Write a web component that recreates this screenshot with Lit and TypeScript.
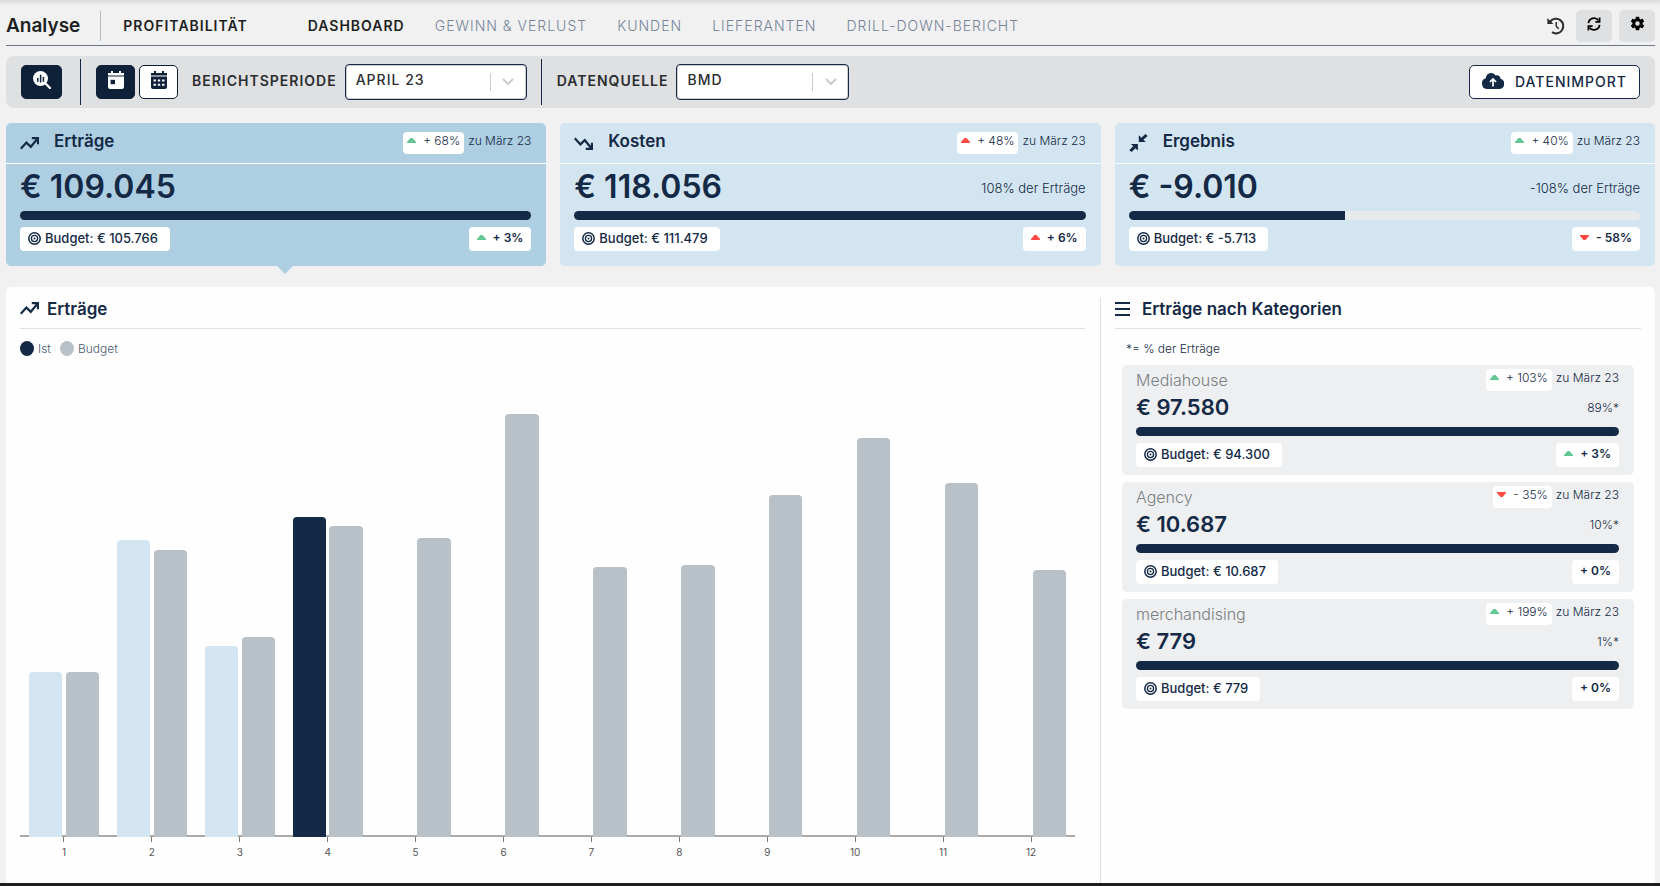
import { LitElement, html, css, svg, nothing } from "lit";
import { customElement, property, state } from "lit/decorators.js";
import { classMap } from "lit/directives/class-map.js";

type Direction = "up" | "down" | "none";
type Tone = "good" | "bad";

interface Delta {
  text: string;
  direction: Direction;
  tone: Tone;
}

interface Kpi {
  id: string;
  title: string;
  value: string;
  share: string;
  progress: number;
  budget: string;
  versusPrevious: Delta;
  versusBudget: Delta;
}

const icons = {
  trendUp: svg`<svg width="19" height="13" viewBox="0 0 19 13" fill="none" stroke="currentColor" stroke-width="2.200" aria-hidden="true"><path d="M.8 11.800 6.400 5.600l4.400 4.200 6.600-8"/><path d="M11.800 1.200H18v6"/></svg>`,
  trendDown: svg`<svg width="19" height="13" viewBox="0 0 19 13" fill="none" stroke="currentColor" stroke-width="2.200" aria-hidden="true"><path d="M.8 1.200l5.600 6.200 4.400-4.200 6.600 8"/><path d="M11.800 11.800H18v-6"/></svg>`,
  compress: svg`<svg width="19" height="18" viewBox="0 0 19 18" fill="currentColor" aria-hidden="true"><path d="M9.800 1.200v6.900h7l-2.400-2.400L18.600 2 16.400 0l-4 3.700z"/><path d="M8.900 16.800V9.900H1.900l2.400 2.400L.3 16l2.200 2 4-3.700z"/></svg>`,
  target: svg`<svg width="13" height="13" viewBox="0 0 13 13" fill="none" stroke="currentColor" aria-hidden="true"><circle cx="6.500" cy="6.500" r="5.700" stroke-width="1.500"/><circle cx="6.500" cy="6.500" r="3.100" stroke-width="1.300"/><circle cx="6.500" cy="6.500" r="1" fill="currentColor" stroke="none"/></svg>`,
  list: svg`<svg width="15" height="14" viewBox="0 0 15 14" stroke="currentColor" stroke-width="2" aria-hidden="true"><path d="M0 1h15M0 7h15M0 13h15"/></svg>`,
  history: svg`<svg width="18" height="18" viewBox="0 0 18 18" fill="none" stroke="currentColor" aria-hidden="true"><path d="M3.200 4.600A7.300 7.300 0 1 1 5 15.200" stroke-width="2"/><path d="M.4 1v6h6z" fill="currentColor" stroke="none"/><path d="M9.200 5v4.200l2.600 2.600" stroke-width="1.500"/></svg>`,
  refresh: svg`<svg width="14" height="14" viewBox="0 0 14 14" fill="none" stroke="currentColor" stroke-width="1.700" aria-hidden="true"><path d="M1.400 6.200A5.600 5.600 0 0 1 11.600 3.600M12.600 7.800A5.600 5.600 0 0 1 2.400 10.400"/><path d="M12.600.6v4.200H8.400M1.400 13.400V9.200h4.200"/></svg>`,
  gear: svg`<svg width="17" height="17" viewBox="0 0 24 24" fill="currentColor" aria-hidden="true"><path d="M19.140 12.940c.04-.3.06-.61.06-.94 0-.32-.02-.64-.07-.94l2.030-1.580c.18-.14.23-.41.12-.61l-1.920-3.320c-.12-.22-.37-.29-.59-.22l-2.390.96c-.5-.38-1.030-.7-1.620-.94l-.36-2.540c-.04-.24-.24-.41-.48-.41h-3.840c-.24 0-.43.17-.47.41l-.36 2.540c-.59.24-1.130.57-1.620.94l-2.390-.96c-.22-.08-.47 0-.59.22L2.740 8.870c-.12.21-.08.47.12.61l2.030 1.580c-.05.3-.09.63-.09.94s.02.64.07.94l-2.030 1.580c-.18.14-.23.41-.12.61l1.920 3.320c.12.22.37.29.59.22l2.390-.96c.5.38 1.030.7 1.620.94l.36 2.540c.05.24.24.41.48.41h3.840c.24 0 .44-.17.47-.41l.36-2.540c.59-.24 1.130-.56 1.620-.94l2.390.96c.22.08.47 0 .59-.22l1.920-3.320c.12-.22.07-.47-.12-.61l-2.010-1.580zM12 15.200a3.200 3.200 0 1 1 0-6.400 3.200 3.200 0 0 1 0 6.400z"/></svg>`,
  searchChart: svg`<svg width="18" height="18" viewBox="0 0 18 18" aria-hidden="true"><circle cx="7.500" cy="7.500" r="7.500" fill="currentColor"/><path d="M12 12l5 5" stroke="currentColor" stroke-width="2.400" stroke-linecap="round"/><path d="M4.800 7v3.800M7.600 3.800v7.600M10.400 6v4.800" stroke="#0e2138" stroke-width="1.500"/></svg>`,
  day: svg`<svg width="16" height="18" viewBox="0 0 16 18" aria-hidden="true"><path d="M3 0h2v2h6V0h2v2h3v2.600H0V2h3z" fill="currentColor"/><path d="M0 5.600h16V16a2 2 0 0 1-2 2H2a2 2 0 0 1-2-2z" fill="currentColor"/><path d="M2.600 8.800h4.400v4.400H2.600z" fill="#0e2138"/></svg>`,
  month: svg`<svg width="16" height="18" viewBox="0 0 16 18" aria-hidden="true"><path d="M3 0h2v2h6V0h2v2h3v2.600H0V2h3z" fill="currentColor"/><path d="M0 5.600h16V16a2 2 0 0 1-2 2H2a2 2 0 0 1-2-2z" fill="currentColor"/><path d="M2.500 8.500h2.400v2H2.500zM6.800 8.500h2.400v2H6.800zM11.100 8.500h2.400v2h-2.400zM2.500 12.800h2.400v2H2.500zM6.800 12.800h2.400v2H6.800zM11.100 12.800h2.400v2h-2.400z" fill="#fff"/></svg>`,
  cloud: svg`<svg width="22" height="16" viewBox="0 0 22 16" aria-hidden="true"><path d="M5.500 16A5.500 5.500 0 0 1 3.700 5.300 6 6 0 0 1 9 0c2.200 0 3.600 1 4.700 2.400 2.600-.7 4.800 1 4.800 3.400A5.200 5.200 0 0 1 17.200 16z" fill="currentColor"/><path d="M11 13.500V6.200M7.900 9 11 5.900 14.100 9" stroke="#fff" stroke-width="1.700" fill="none"/></svg>`,
  chevron: svg`<svg width="12" height="8" viewBox="0 0 12 8" fill="none" stroke="currentColor" stroke-width="2" stroke-linecap="round" aria-hidden="true"><path d="M1.500 1.500 6 6l4.500-4.500"/></svg>`,
};

const cardIcon: Record<string, unknown> = {
  income: icons.trendUp,
  costs: icons.trendDown,
  result: icons.compress,
};

@customElement("delta-badge")
class DeltaBadge extends LitElement {
  @property({ attribute: false }) delta!: Delta;
  @property({ type: Boolean, reflect: true }) strong = false;

  static styles = css`
    :host {
      display: inline-flex;
      align-items: center;
      box-sizing: border-box;
      height: 22px;
      padding: 0 4px 5px;
      border-radius: 4px;
      background: #fff;
      font-size: 12px;
      font-weight: 300;
      white-space: nowrap;
    }
    :host([strong]) {
      height: 24px;
      padding: 0 8px 3px;
      font-weight: 600;
    }
    .arrow {
      margin-right: 7px;
    }
    .good {
      color: #63c794;
    }
    .bad {
      color: #ff4842;
    }
  `;

  render() {
    const { text, direction, tone } = this.delta;
    return html`${direction === "none"
        ? nothing
        : html`<svg class="arrow ${tone}" width="9" height="5" viewBox="0 0 9 5" fill="currentColor" aria-hidden="true">
            <path d=${direction === "up" ? "M3.500 0h2L9 4v1H0V4z" : "M3.500 5h2L9 1V0H0v1z"} />
          </svg>`}<span>${text}</span>`;
  }
}

@customElement("budget-line")
class BudgetLine extends LitElement {
  @property({ attribute: false }) kpi!: Kpi;

  static styles = css`
    :host {
      display: block;
    }
    .track {
      height: 9px;
      border-radius: 5px;
      background: #e7eaed;
      overflow: hidden;
    }
    .fill {
      height: 100%;
      background: #142946;
    }
    .row {
      display: flex;
      align-items: center;
      justify-content: space-between;
      margin-top: 7px;
    }
    .budget {
      display: flex;
      align-items: center;
      gap: 4px;
      box-sizing: border-box;
      height: 24px;
      padding: 0 12px 2px 8px;
      border-radius: 4px;
      background: #fff;
      font-weight: 500;
    }
  `;

  render() {
    return html`
      <div class="track"><div class="fill" style="width:${this.kpi.progress}%"></div></div>
      <div class="row">
        <span class="budget">${icons.target}<span>Budget: ${this.kpi.budget}</span></span>
        <delta-badge strong .delta=${this.kpi.versusBudget}></delta-badge>
      </div>
    `;
  }
}

@customElement("kpi-card")
class KpiCard extends LitElement {
  @property({ attribute: false }) kpi!: Kpi;
  @property({ type: Boolean, reflect: true }) selected = false;

  static styles = css`
    :host {
      display: block;
      position: relative;
      border-radius: 5px;
      background: #d3e5f1;
      cursor: pointer;
    }
    :host([selected]) {
      background: #aecee2;
    }
    :host([selected])::after {
      content: "";
      position: absolute;
      top: 100%;
      left: calc(50% + 1px);
      border: 8px solid transparent;
      border-top-color: #aecee2;
      border-bottom: 0;
    }
    .head {
      display: flex;
      align-items: center;
      gap: 14px;
      height: 40px;
      padding: 0 15px 0 14px;
      border-bottom: 1px solid #fff;
    }
    .glyph {
      display: flex;
      width: 20px;
    }
    h2 {
      margin: 0;
      flex: 1;
      font-size: 17px;
      font-weight: 600;
      line-height: 36px;
      padding-bottom: 4px;
    }
    .previous {
      display: flex;
      gap: 4px;
      font-size: 12px;
      font-weight: 300;
      line-height: 17px;
    }
    .body {
      padding: 0 15px 15px 14px;
    }
    .figures {
      display: flex;
      align-items: center;
      justify-content: space-between;
      height: 44px;
      margin-bottom: 3px;
    }
    .value {
      font-size: 32px;
      font-weight: 600;
    }
    .share {
      font-weight: 300;
      padding-top: 4px;
    }
  `;

  render() {
    const k = this.kpi;
    return html`
      <div class="head">
        <span class="glyph">${cardIcon[k.id]}</span>
        <h2>${k.title}</h2>
        <div class="previous">
          <delta-badge .delta=${k.versusPrevious}></delta-badge>
          <span>zu März 23</span>
        </div>
      </div>
      <div class="body">
        <div class="figures">
          <span class="value">${k.value}</span>
          <span class="share">${k.share}</span>
        </div>
        <budget-line .kpi=${k}></budget-line>
      </div>
    `;
  }
}

@customElement("category-card")
class CategoryCard extends LitElement {
  @property({ attribute: false }) kpi!: Kpi;

  static styles = css`
    :host {
      display: block;
      padding: 4px 15px 8px 14px;
      border-radius: 5px;
      background: #edeff1;
    }
    .top,
    .figures {
      display: flex;
      justify-content: space-between;
    }
    .figures {
      align-items: center;
      height: 32px;
      margin-bottom: 4px;
    }
    h3 {
      margin: 0;
      font-size: 16px;
      font-weight: 300;
      line-height: 22px;
      color: #7c7f82;
    }
    .previous {
      display: flex;
      gap: 4px;
      font-size: 12px;
      font-weight: 300;
      line-height: 18px;
    }
    .value {
      font-size: 22px;
      font-weight: 600;
    }
    .share {
      font-size: 12px;
      font-weight: 300;
    }
  `;

  render() {
    const k = this.kpi;
    return html`
      <div class="top">
        <h3>${k.title}</h3>
        <div class="previous">
          <delta-badge .delta=${k.versusPrevious}></delta-badge>
          <span>zu März 23</span>
        </div>
      </div>
      <div class="figures">
        <span class="value">${k.value}</span>
        <span class="share">${k.share}</span>
      </div>
      <budget-line .kpi=${k}></budget-line>
    `;
  }
}

interface Month {
  actual: number;
  budget: number;
}

@customElement("bar-chart")
class BarChart extends LitElement {
  @property({ attribute: false }) months: Month[] = [];
  @property({ type: Number }) current = 4;

  private readonly axisMax = 162300;

  static styles = css`
    :host {
      display: flex;
      flex-direction: column;
    }
    .plot {
      flex: 1;
      min-height: 0;
      display: grid;
      grid-template-columns: repeat(12, 1fr);
      grid-template-rows: 100%;
      background: linear-gradient(#aaa, #aaa) bottom / 100% 2px no-repeat;
    }
    .month {
      display: flex;
      align-items: flex-end;
      gap: 5%;
      padding: 0 10%;
    }
    .bar {
      flex: 1;
      border-radius: 4px 4px 0 0;
    }
    .actual {
      background: #d3e5f1;
    }
    .actual.current {
      background: #142946;
    }
    .budget {
      background: #b8c0c8;
    }
    .axis {
      display: grid;
      grid-template-columns: repeat(12, 1fr);
      font-size: 10px;
      line-height: 12px;
      color: #555;
    }
    .tick {
      display: flex;
      flex-direction: column;
      align-items: center;
      gap: 4px;
    }
    .tick::before {
      content: "";
      width: 1px;
      height: 5px;
      background: #777;
    }
  `;

  private height(value: number) {
    return `height:${((value / this.axisMax) * 100).toFixed(2)}%`;
  }

  render() {
    return html`
      <div class="plot">
        ${this.months.map(
          (m, i) => html`<div class="month">
            <div class=${classMap({ bar: true, actual: true, current: i + 1 === this.current })} style=${this.height(m.actual)}></div>
            <div class="bar budget" style=${this.height(m.budget)}></div>
          </div>`
        )}
      </div>
      <div class="axis">${this.months.map((_, i) => html`<span class="tick">${i + 1}</span>`)}</div>
    `;
  }
}

const up = (text: string, tone: Tone = "good"): Delta => ({ text, direction: "up", tone });
const down = (text: string): Delta => ({ text, direction: "down", tone: "bad" });
const level = (text: string): Delta => ({ text, direction: "none", tone: "good" });

const kpis: Kpi[] = [
  { id: "income", title: "Erträge", value: "€ 109.045", share: "", progress: 100, budget: "€ 105.766", versusPrevious: up("+ 68%"), versusBudget: up("+ 3%") },
  { id: "costs", title: "Kosten", value: "€ 118.056", share: "108% der Erträge", progress: 100, budget: "€ 111.479", versusPrevious: up("+ 48%", "bad"), versusBudget: up("+ 6%", "bad") },
  { id: "result", title: "Ergebnis", value: "€ -9.010", share: "-108% der Erträge", progress: 42.4, budget: "€ -5.713", versusPrevious: up("+ 40%"), versusBudget: down("- 58%") },
];

const categories: Kpi[] = [
  { id: "mediahouse", title: "Mediahouse", value: "€ 97.580", share: "89%*", progress: 100, budget: "€ 94.300", versusPrevious: up("+ 103%"), versusBudget: up("+ 3%") },
  { id: "agency", title: "Agency", value: "€ 10.687", share: "10%*", progress: 100, budget: "€ 10.687", versusPrevious: down("- 35%"), versusBudget: level("+ 0%") },
  { id: "merchandising", title: "merchandising", value: "€ 779", share: "1%*", progress: 100, budget: "€ 779", versusPrevious: up("+ 199%"), versusBudget: level("+ 0%") },
];

const months: Month[] = [
  { actual: 56200, budget: 56200 },
  { actual: 101200, budget: 97800 },
  { actual: 64900, budget: 68100 },
  { actual: 109045, budget: 105766 },
  { actual: 0, budget: 101900 },
  { actual: 0, budget: 143800 },
  { actual: 0, budget: 92000 },
  { actual: 0, budget: 92700 },
  { actual: 0, budget: 116500 },
  { actual: 0, budget: 135600 },
  { actual: 0, budget: 120600 },
  { actual: 0, budget: 91000 },
];

const views = ["Dashboard", "Gewinn & Verlust", "Kunden", "Lieferanten", "Drill-Down-Bericht"];

@customElement("app-root")
class AppRoot extends LitElement {
  @state() private selected = "income";
  @state() private view = views[0];

  static styles = css`
    :host {
      display: flex;
      flex-direction: column;
      box-sizing: border-box;
      height: 100vh;
      min-height: 760px;
      padding: 0 5px 0 6px;
      border-bottom: 3px solid #1d1e20;
      background: linear-gradient(#dcdcdc, #f1f1f1 6px);
      color: #142946;
      font-family: Inter, "Liberation Sans", sans-serif;
      font-size: 13px;
      line-height: 17px;
    }
    button,
    select {
      font: inherit;
      color: inherit;
      cursor: pointer;
    }
    button {
      display: flex;
      align-items: center;
      justify-content: center;
      padding: 0;
      border: 0;
    }
    .header {
      display: flex;
      align-items: center;
      height: 46px;
      padding-top: 6px;
      box-sizing: border-box;
      border-bottom: 1px solid #6d7889;
      color: #1d1f22;
    }
    h1 {
      margin: 0;
      font-size: 19px;
      font-weight: 600;
      line-height: 24px;
    }
    .section {
      margin-left: 20px;
      padding-left: 22px;
      border-left: 1px solid #b4bdc7;
      line-height: 30px;
    }
    .section,
    .nav a {
      font-size: 14px;
      font-weight: 600;
      letter-spacing: 1px;
      text-transform: uppercase;
    }
    .nav {
      display: flex;
      gap: 30px;
      margin-left: 60px;
      flex: 1;
    }
    .nav a {
      color: #75849a;
      font-weight: 300;
      text-decoration: none;
    }
    .nav a.active {
      color: #1d1f22;
      font-weight: 600;
    }
    .tools {
      display: flex;
      align-items: center;
      gap: 7px;
      color: #000;
    }
    .tools button {
      width: 36px;
      height: 32px;
      padding-bottom: 4px;
      border-radius: 5px;
      background: #dfe0e2;
    }
    .tools .plain {
      width: 18px;
      margin-right: 4px;
      padding: 0;
      background: none;
      color: #2a2c2f;
    }
    .toolbar {
      display: flex;
      align-items: center;
      height: 52px;
      margin-top: 10px;
      padding: 0 15px;
      border-radius: 8px;
      background: #dfe0e2;
    }
    .rule {
      align-self: stretch;
      width: 1px;
      margin: 3px 15px 3px 14px;
      background: #142946;
    }
    .toolbar .rule + label {
      margin-left: 0;
    }
    .tile {
      box-sizing: border-box;
      width: 39px;
      height: 34px;
      padding-bottom: 4px;
      border: 1px solid #0e2138;
      border-radius: 5px;
      background: #fff;
      color: #0e2138;
    }
    .tile.dark {
      background: #0e2138;
      color: #fff;
    }
    .tile.wide {
      width: 41px;
      margin-right: 4px;
    }
    .periods {
      display: flex;
      gap: 4px;
    }
    label {
      margin: 0 8px 3px 14px;
      font-size: 14px;
      font-weight: 600;
      letter-spacing: 1px;
      text-transform: uppercase;
      color: #2b2d30;
    }
    .field {
      display: grid;
      align-items: center;
      grid-template-columns: 1fr 36px;
      box-sizing: border-box;
      width: 182px;
      height: 36px;
      border: 1px solid #142946;
      border-radius: 4px;
      background: #fff;
      box-shadow: inset 0 0 0 1px #ccc;
    }
    .field.narrow {
      width: 173px;
    }
    .field select {
      grid-area: 1 / 1 / 2 / 3;
      width: 100%;
      height: 34px;
      padding: 0 40px 5px 10px;
      border: 0;
      background: none;
      appearance: none;
      font-size: 14px;
      font-weight: 500;
      letter-spacing: 1px;
      color: #2b2d30;
    }
    .caret {
      grid-area: 1 / 2;
      display: flex;
      align-items: center;
      justify-content: center;
      height: 18px;
      border-left: 1px solid #ccc;
      color: #ccc;
      pointer-events: none;
    }
    .import {
      height: 34px;
      margin-left: auto;
      padding: 0 12px 2px 12px;
      gap: 11px;
      border: 1px solid #142946;
      border-radius: 5px;
      background: #fff;
      font-size: 14px;
      font-weight: 500;
      letter-spacing: 1px;
    }
    .cards {
      display: grid;
      grid-template-columns: repeat(3, 1fr);
      gap: 14px;
      margin-top: 15px;
    }
    .panel {
      flex: 1;
      min-height: 0;
      display: grid;
      grid-template-columns: minmax(0, 1094fr) minmax(0, 555fr);
      grid-template-rows: 100%;
      margin-top: 21px;
      border-radius: 5px 5px 0 0;
      background: #fefefe;
    }
    .chart {
      display: flex;
      flex-direction: column;
      padding: 10px 15px 25px 14px;
    }
    .aside {
      margin-top: 11px;
      padding: 0 14px;
      border-left: 1px solid #dcdfe3;
    }
    .heading {
      display: flex;
      align-items: center;
      gap: 8px;
      height: 31px;
      border-bottom: 1px solid #dcdfe3;
    }
    .heading h2 {
      margin: 0;
      font-size: 17px;
      font-weight: 600;
      line-height: 20px;
      padding-bottom: 8px;
    }
    .heading svg {
      margin-bottom: 9px;
    }
    .aside .heading {
      gap: 12px;
      height: 30px;
    }
    .legend {
      display: flex;
      gap: 9px;
      margin-top: 11px;
      font-size: 12px;
      font-weight: 300;
      color: #4c5a70;
    }
    .legend span {
      display: flex;
      align-items: center;
      gap: 4px;
    }
    .legend span::before {
      content: "";
      width: 14px;
      height: 15px;
      border-radius: 50%;
      background: #142946;
    }
    .legend .plan::before {
      background: #b8c0c8;
    }
    bar-chart {
      flex: 1;
      min-height: 0;
      margin: 3px 10px 0 0;
    }
    .note {
      margin: 11px 11px 8px;
      font-size: 12px;
      font-weight: 300;
    }
    .list {
      display: grid;
      gap: 7px;
      padding: 0 7px;
    }
  `;

  render() {
    return html`
      <header class="header">
        <h1>Analyse</h1>
        <span class="section">Profitabilität</span>
        <nav class="nav">
          ${views.map(
            (v) => html`<a href="#" class=${classMap({ active: v === this.view })} @click=${(e: Event) => {
              e.preventDefault();
              this.view = v;
            }}>${v}</a>`
          )}
        </nav>
        <div class="tools">
          <button class="plain" aria-label="Verlauf">${icons.history}</button>
          <button aria-label="Aktualisieren">${icons.refresh}</button>
          <button aria-label="Einstellungen">${icons.gear}</button>
        </div>
      </header>

      <div class="toolbar">
        <button class="tile dark wide" aria-label="Analyse suchen">${icons.searchChart}</button>
        <span class="rule"></span>
        <div class="periods">
          <button class="tile dark" aria-label="Monat">${icons.day}</button>
          <button class="tile" aria-label="Jahr">${icons.month}</button>
        </div>
        <label for="period">Berichtsperiode</label>
        <div class="field">
          <select id="period"><option>APRIL 23</option></select>
          <span class="caret">${icons.chevron}</span>
        </div>
        <span class="rule"></span>
        <label for="source">Datenquelle</label>
        <div class="field narrow">
          <select id="source"><option>BMD</option></select>
          <span class="caret">${icons.chevron}</span>
        </div>
        <button class="import">${icons.cloud}<span>DATENIMPORT</span></button>
      </div>

      <section class="cards">
        ${kpis.map((k) => html`<kpi-card .kpi=${k} ?selected=${k.id === this.selected} @click=${() => (this.selected = k.id)}></kpi-card>`)}
      </section>

      <main class="panel">
        <section class="chart">
          <div class="heading">${icons.trendUp}<h2>Erträge</h2></div>
          <div class="legend"><span>Ist</span><span class="plan">Budget</span></div>
          <bar-chart .months=${months} current="4"></bar-chart>
        </section>
        <aside class="aside">
          <div class="heading">${icons.list}<h2>Erträge nach Kategorien</h2></div>
          <p class="note">*= % der Erträge</p>
          <div class="list">${categories.map((c) => html`<category-card .kpi=${c}></category-card>`)}</div>
        </aside>
      </main>
    `;
  }
}
